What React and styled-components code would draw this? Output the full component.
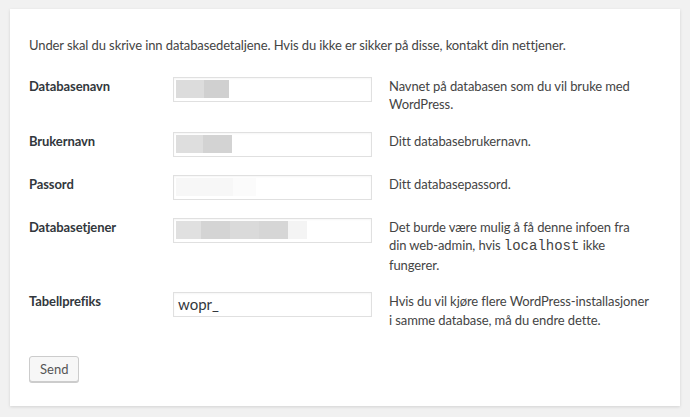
import styled, { createGlobalStyle } from "styled-components";

const GlobalStyle = createGlobalStyle`
  html, body {
    margin: 0;
    background: #f1f1f1;
  }
  body {
    font-family: Lato, "Liberation Sans", sans-serif;
    letter-spacing: -0.1px;
    color: #444;
  }
  * {
    box-sizing: border-box;
  }
`;

const Page = styled.div`
  padding: 9px 10px 12px;
`;

const Card = styled.div`
  background: #fff;
  box-shadow: 0 1px 3px rgba(0, 0, 0, 0.13);
  padding: 27px 19px 24px;
`;

const Intro = styled.p`
  margin: 0 0 13px;
  font-size: 13px;
  line-height: 18.5px;
`;

const FormTable = styled.div`
  display: flex;
  flex-direction: column;
  margin-bottom: 18px;
`;

const Row = styled.div`
  display: grid;
  grid-template-columns: 127px 199px 1fr;
  column-gap: 17px;
  align-items: start;
  padding: 9px 0;
  font-size: 13px;
  line-height: 18.5px;
`;

const Label = styled.div`
  font-weight: 700;
  color: #32373c;
`;

const Field = styled.div`
  height: 25px;
  border: 1px solid #e0e0e0;
  box-shadow: inset 0 1px 2px rgba(0, 0, 0, 0.04);
  background: #fff;
  display: flex;
  align-items: center;
  padding: 0 2px;
  overflow: hidden;
`;

const Redacted = styled.div`
  display: flex;
  height: 18px;
`;

const Block = styled.div`
  width: ${(p) => p.$w}px;
  height: 100%;
  background: ${(p) => p.$c};
`;

const Value = styled.span`
  font-size: 15px;
  letter-spacing: 0;
  color: #32373c;
  padding-left: 2px;
`;

const Desc = styled.div`
  color: #444;
  white-space: nowrap;
`;

const Code = styled.code`
  font-family: "Liberation Mono", "DejaVu Sans Mono", monospace;
  font-size: 14px;
  letter-spacing: 0;
`;

const Button = styled.button`
  display: block;
  height: 26px;
  padding: 0 10px;
  font-family: Lato, "Liberation Sans", sans-serif;
  font-size: 13px;
  color: #555;
  background: #f7f7f7;
  border: 1px solid #ccc;
  border-radius: 3px;
  box-shadow: 0 1px 0 #ccc;
  cursor: pointer;
`;

const rows = [
  {
    label: "Databasenavn",
    blocks: [
      { w: 28, c: "#dcdcdc" },
      { w: 25, c: "#d0d0d0" },
    ],
    desc: (
      <>
        Navnet på databasen som du vil bruke med
        <br />
        WordPress.
      </>
    ),
  },
  {
    label: "Brukernavn",
    blocks: [
      { w: 27, c: "#dedede" },
      { w: 29, c: "#d3d3d3" },
    ],
    desc: "Ditt databasebrukernavn.",
  },
  {
    label: "Passord",
    blocks: [
      { w: 57, c: "#f7f7f7" },
      { w: 23, c: "#fbfbfb" },
    ],
    desc: "Ditt databasepassord.",
  },
  {
    label: "Databasetjener",
    blocks: [
      { w: 25, c: "#e0e0e0" },
      { w: 29, c: "#d4d4d4" },
      { w: 29, c: "#dadada" },
      { w: 29, c: "#d6d6d6" },
      { w: 19, c: "#f4f4f4" },
    ],
    desc: (
      <>
        Det burde være mulig å få denne infoen fra
        <br />
        din web-admin, hvis <Code>localhost</Code> ikke
        <br />
        fungerer.
      </>
    ),
  },
  {
    label: "Tabellprefiks",
    value: "wopr_",
    desc: (
      <>
        Hvis du vil kjøre flere WordPress-installasjoner
        <br />i samme database, må du endre dette.
      </>
    ),
  },
];

export default function App() {
  return (
    <>
      <GlobalStyle />
      <Page>
        <Card>
          <Intro>
            Under skal du skrive inn databasedetaljene. Hvis du ikke er sikker
            på disse, kontakt din nettjener.
          </Intro>
          <FormTable>
            {rows.map((row) => (
              <Row key={row.label}>
                <Label>{row.label}</Label>
                <Field>
                  {row.value ? (
                    <Value>{row.value}</Value>
                  ) : (
                    <Redacted>
                      {row.blocks.map((b, i) => (
                        <Block key={i} $w={b.w} $c={b.c} />
                      ))}
                    </Redacted>
                  )}
                </Field>
                <Desc>{row.desc}</Desc>
              </Row>
            ))}
          </FormTable>
          <Button type="button">Send</Button>
        </Card>
      </Page>
    </>
  );
}
